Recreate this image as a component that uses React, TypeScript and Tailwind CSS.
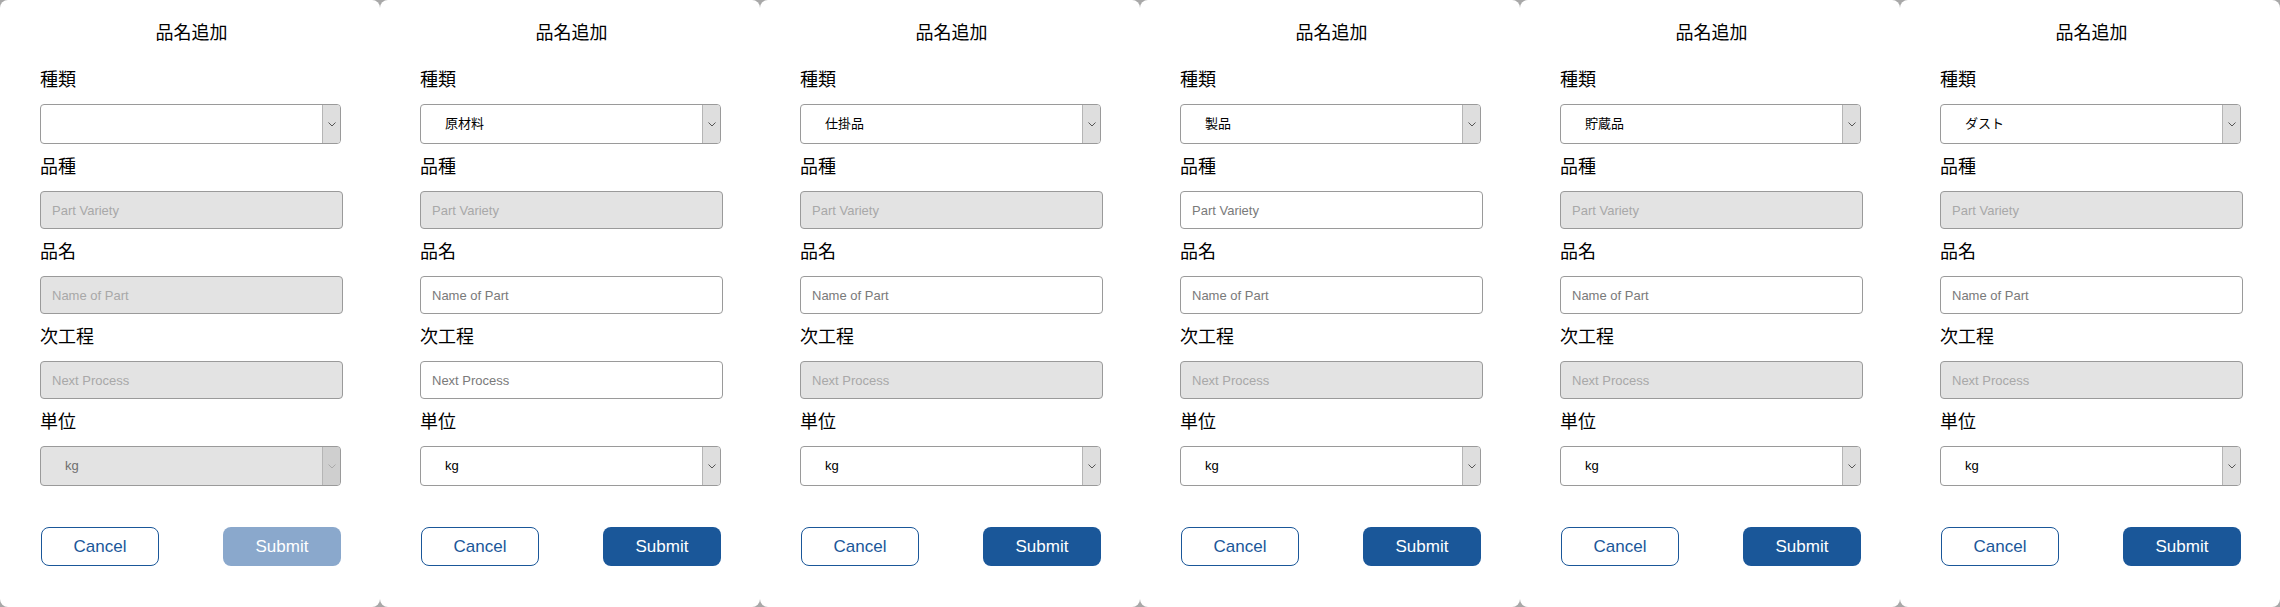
import React from 'react'

type PanelState = {
  kind: string
  variety: boolean
  name: boolean
  next: boolean
  unit: boolean
  submit: boolean
}

const panels: PanelState[] = [
  { kind: '', variety: false, name: false, next: false, unit: false, submit: false },
  { kind: '原材料', variety: false, name: true, next: true, unit: true, submit: true },
  { kind: '仕掛品', variety: false, name: true, next: false, unit: true, submit: true },
  { kind: '製品', variety: true, name: true, next: false, unit: true, submit: true },
  { kind: '貯蔵品', variety: false, name: true, next: false, unit: true, submit: true },
  { kind: 'ダスト', variety: false, name: true, next: false, unit: true, submit: true },
]

function Label({ children }: { children: React.ReactNode }) {
  return <div className="h-6 leading-6 text-[18px] text-black mt-[11px] mb-3">{children}</div>
}

function FakeSelect({ value, enabled }: { value: string; enabled: boolean }) {
  return (
    <div
      className={`flex h-10 w-[301px] rounded-[4px] border border-[#9a9a9a] overflow-hidden ${
        enabled ? 'bg-white' : 'bg-[#e3e3e3]'
      }`}
    >
      <div className={`flex-1 flex items-center pl-6 text-[13px] ${enabled ? 'text-black' : 'text-[#6f6f6f]'}`}>
        {value}
      </div>
      <div
        className={`w-[18px] flex items-center justify-center border-l border-[#b5b5b5] ${
          enabled ? 'bg-[#dedede]' : 'bg-[#cfcfcf]'
        }`}
      >
        <svg width="8" height="5" viewBox="0 0 8 5" fill="none">
          <path d="M0.5 0.5 L4 4 L7.5 0.5" stroke={enabled ? '#555' : '#aaa'} strokeWidth="1" />
        </svg>
      </div>
    </div>
  )
}

function Field({ placeholder, enabled }: { placeholder: string; enabled: boolean }) {
  return (
    <input
      disabled={!enabled}
      placeholder={placeholder}
      className={`block h-[38px] w-[303px] rounded-[4px] border border-[#9a9a9a] px-[11px] text-[13px] outline-none ${
        enabled ? 'bg-white placeholder:text-[#7a7a7a]' : 'bg-[#e3e3e3] placeholder:text-[#a8a8a8]'
      }`}
    />
  )
}

function Panel({ p }: { p: PanelState }) {
  return (
    <div className="flex flex-col bg-white rounded-[8px] h-[607px] pl-10 pt-5">
      <div className="w-[303px] text-center text-[18px] leading-[27px] text-black mb-[10px]">品名追加</div>
      <Label>種類</Label>
      <FakeSelect value={p.kind} enabled />
      <Label>品種</Label>
      <Field placeholder="Part Variety" enabled={p.variety} />
      <Label>品名</Label>
      <Field placeholder="Name of Part" enabled={p.name} />
      <Label>次工程</Label>
      <Field placeholder="Next Process" enabled={p.next} />
      <Label>単位</Label>
      <FakeSelect value="kg" enabled={p.unit} />
      <div className="flex justify-between w-[301px] mt-[41px] pl-px">
        <button className="h-[39px] w-[118px] rounded-[8px] border border-[#1a5799] bg-white text-[17px] text-[#1a5799]">
          Cancel
        </button>
        <button
          className={`h-[39px] w-[118px] rounded-[8px] text-[17px] text-white ${
            p.submit ? 'bg-[#1a5799]' : 'bg-[#8aa8cc]'
          }`}
        >
          Submit
        </button>
      </div>
    </div>
  )
}

export default function App() {
  return (
    <div className="w-[2280px] h-[607px] grid grid-cols-6 bg-[#a8a8a8] font-['Liberation_Sans','Noto_Sans_CJK_JP',sans-serif]">
      {panels.map((p, i) => (
        <Panel key={i} p={p} />
      ))}
    </div>
  )
}
